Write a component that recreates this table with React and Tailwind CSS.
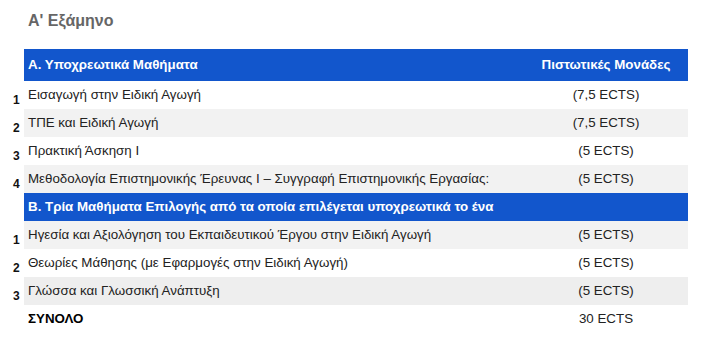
import React from 'react'

const partA = [
  { n: 1, title: 'Εισαγωγή στην Ειδική Αγωγή', ects: '(7,5 ECTS)', bg: 'bg-white' },
  { n: 2, title: 'ΤΠΕ και Ειδική Αγωγή', ects: '(7,5 ECTS)', bg: 'bg-[#f2f2f2]' },
  { n: 3, title: 'Πρακτική Άσκηση Ι', ects: '(5 ECTS)', bg: 'bg-white' },
  {
    n: 4,
    title: 'Μεθοδολογία Επιστημονικής Έρευνας Ι – Συγγραφή Επιστημονικής Εργασίας:',
    ects: '(5 ECTS)',
    bg: 'bg-[#f2f2f2]'
  }
]

const partB = [
  {
    n: 1,
    title: 'Ηγεσία και Αξιολόγηση του Εκπαιδευτικού Έργου στην Ειδική Αγωγή',
    ects: '(5 ECTS)',
    bg: 'bg-[#f2f2f2]'
  },
  {
    n: 2,
    title: 'Θεωρίες Μάθησης (με Εφαρμογές στην Ειδική Αγωγή)',
    ects: '(5 ECTS)',
    bg: 'bg-white'
  },
  { n: 3, title: 'Γλώσσα και Γλωσσική Ανάπτυξη', ects: '(5 ECTS)', bg: 'bg-[#eeeeee]' }
]

function Row({ n, title, ects, bg }) {
  return (
    <div className="flex h-[28px]">
      <div className="w-[24px] pl-[13px] pt-[12px] text-[12px] leading-[14px] font-bold text-[#111]">
        {n}
      </div>
      <div className={`flex w-[664px] items-center ${bg}`}>
        <div className="flex-1 pl-[4px]">{title}</div>
        <div className="w-[164px] text-center">{ects}</div>
      </div>
    </div>
  )
}

function Header({ left, right, tall }) {
  return (
    <div className="flex">
      <div className="w-[24px]" />
      <div
        className={`flex w-[664px] items-center bg-[#1256cc] font-bold text-white ${
          tall ? 'h-[32px]' : 'h-[28px]'
        }`}
      >
        <div className="flex-1 pl-[4px]">{left}</div>
        {right !== undefined && <div className="w-[164px] text-center">{right}</div>}
      </div>
    </div>
  )
}

export default function App() {
  return (
    <div
      className="h-[359px] w-[709px] bg-white text-[13.33px] text-[#222]"
      style={{ fontFamily: '"Liberation Sans", Arial, sans-serif' }}
    >
      <h2 className="pt-[9px] pl-[28px] text-[16px] leading-6 font-bold text-[#666]">
        Α' Εξάμηνο
      </h2>
      <div className="mt-[16px] flex flex-col">
        <Header left="Α. Υποχρεωτικά Μαθήματα" right="Πιστωτικές Μονάδες" tall />
        {partA.map(r => (
          <Row key={'a' + r.n} {...r} />
        ))}
        <Header left="Β. Τρία Μαθήματα Επιλογής από τα οποία επιλέγεται υποχρεωτικά το ένα" />
        {partB.map(r => (
          <Row key={'b' + r.n} {...r} />
        ))}
        <div className="flex h-[28px]">
          <div className="w-[24px]" />
          <div className="flex w-[664px] items-center">
            <div className="flex-1 pl-[4px] font-bold text-black">ΣΥΝΟΛΟ</div>
            <div className="w-[164px] text-center">30 ECTS</div>
          </div>
        </div>
      </div>
    </div>
  )
}
